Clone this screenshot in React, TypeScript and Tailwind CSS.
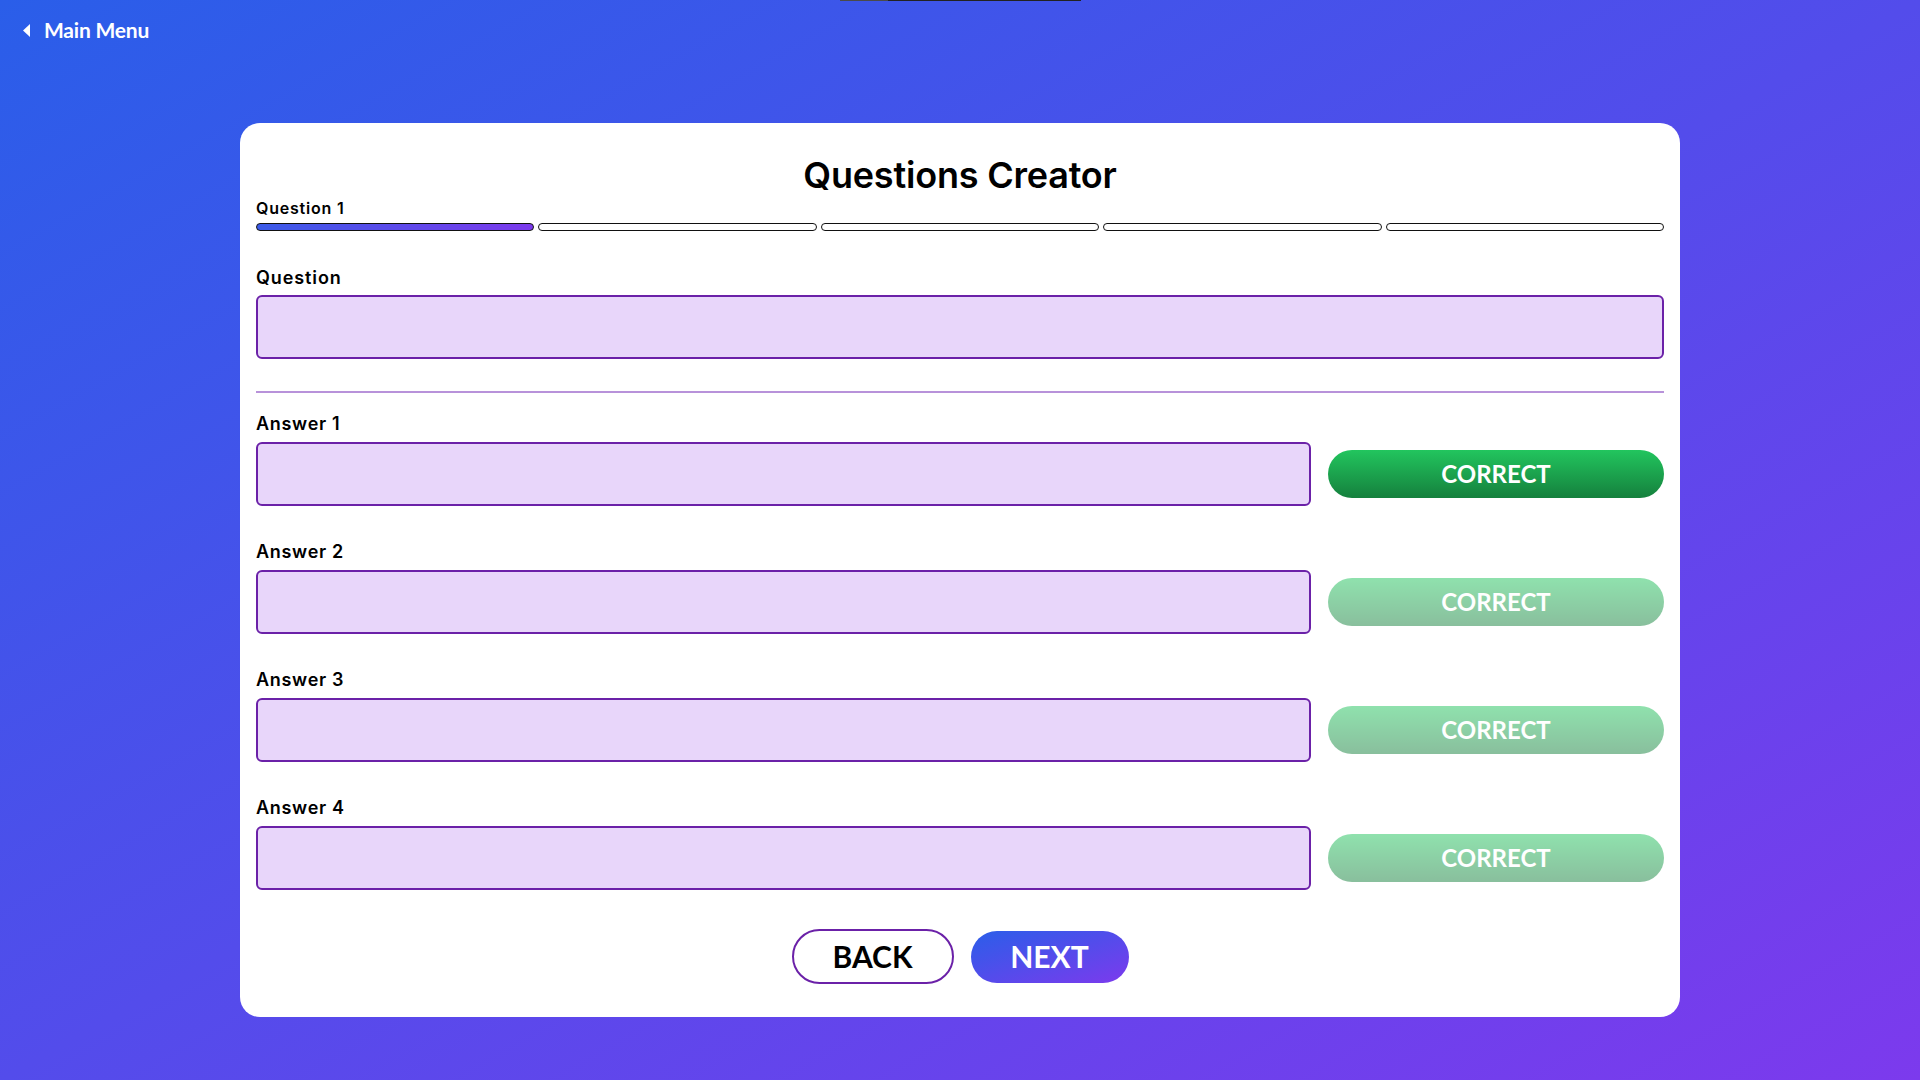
import React from 'react';

const answers = [1, 2, 3, 4];

const App = () => {
  // only the first answer is marked correct
  const correctIndex = 0;

  return (
    <div className="relative min-h-screen w-full bg-linear-to-br/srgb from-[#2a5ee9] to-[#7c3aed] font-[Lato,sans-serif] text-black">
      {/* thin loader line at the very top */}
      <div className="absolute top-0 left-[840px] flex h-px w-[241px]">
        <div className="w-[48px] bg-[#4a4a4a]" />
        <div className="flex-1 bg-[#222]" />
      </div>

      <div className="flex items-center gap-[13px] px-[23px] pt-[16px] text-white">
        <svg width="8" height="13" viewBox="0 0 8 13">
          <polygon points="7,0 7,13 0,6.5" fill="white" />
        </svg>
        <span className="text-[21px] leading-[28px] font-bold tracking-[-0.2px]">Main Menu</span>
      </div>

      <div className="mx-auto mt-[79px] flex w-[1440px] flex-col rounded-[20px] bg-white px-[16px] pt-[32px] pb-[33px]">
        <h1 className="text-center font-[Inter,sans-serif] text-[36px] leading-[40px] font-semibold tracking-[-0.2px]">
          Questions Creator
        </h1>

        <div className="mt-[3px] font-[Inter,sans-serif] text-[16px] leading-[20px] font-semibold tracking-[0.8px]">
          Question 1
        </div>
        <div className="mt-[5px] flex gap-[4px]">
          {[0, 1, 2, 3, 4].map((i) => (
            <div
              key={i}
              className={
                i === 0
                  ? 'h-[8px] flex-1 rounded-full border border-[#111] bg-linear-to-r/srgb from-[#3b5be8] to-[#7c3aed]'
                  : 'h-[8px] flex-1 rounded-full border border-[#111] bg-white'
              }
            />
          ))}
        </div>

        <label className="mt-[35px] font-[Inter,sans-serif] text-[18px] leading-[24px] font-semibold tracking-[0.9px]">
          Question
        </label>
        <input
          type="text"
          className="mt-[5px] h-[64px] w-full rounded-[6px] border-2 border-[#6b21a8] bg-[#e8d6fa] px-4 text-[20px] outline-none"
        />

        <div className="mt-[32px] h-[2px] w-full bg-[#b892da]" />

        <div className="mt-[19px] flex flex-col gap-[34px]">
          {answers.map((n, i) => (
            <div key={n} className="flex flex-col">
              <label className="font-[Inter,sans-serif] text-[18px] leading-[24px] font-semibold tracking-[0.7px]">
                Answer {n}
              </label>
              <div className="mt-[6px] flex items-center gap-[17px]">
                <input
                  type="text"
                  className="h-[64px] flex-1 rounded-[6px] border-2 border-[#6b21a8] bg-[#e8d6fa] px-4 text-[20px] outline-none"
                />
                <button
                  className={
                    i === correctIndex
                      ? 'h-[48px] w-[336px] rounded-full bg-linear-to-b/srgb from-[#22c55e] to-[#15803d] text-[24px] font-bold text-white'
                      : 'h-[48px] w-[336px] rounded-full bg-linear-to-b/srgb from-[#22c55e] to-[#15803d] text-[24px] font-bold text-white opacity-50'
                  }
                >
                  CORRECT
                </button>
              </div>
            </div>
          ))}
        </div>

        <div className="mt-[39px] flex items-center justify-center gap-[17px]">
          <button className="h-[55px] w-[162px] rounded-full border-2 border-[#6b21a8] bg-white text-[30px] font-bold">
            BACK
          </button>
          <button className="h-[52px] w-[158px] rounded-full bg-linear-to-br/srgb from-[#2a5ee9] to-[#7c3aed] text-[30px] font-bold text-white">
            NEXT
          </button>
        </div>
      </div>
    </div>
  );
};

export default App;
